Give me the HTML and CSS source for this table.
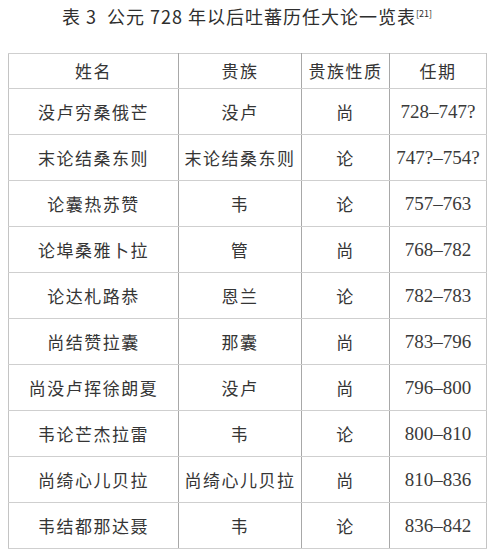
FILE: index.html
```html
<!DOCTYPE html>
<html lang="zh">
<head>
<meta charset="utf-8">
<link rel="stylesheet" href="styles.css">
</head>
<body>
<div class="page">
  <h1 class="title">表 3&nbsp; 公元 728 年以后吐蕃历任大论一览表<sup class="ref">[21]</sup></h1>
  <table class="list">
    <colgroup>
      <col class="c-name">
      <col class="c-clan">
      <col class="c-kind">
      <col class="c-term">
    </colgroup>
    <thead>
      <tr><th>姓名</th><th>贵族</th><th>贵族性质</th><th>任期</th></tr>
    </thead>
    <tbody>
      <tr><td>没卢穷桑俄芒</td><td>没卢</td><td>尚</td><td class="num">728–747?</td></tr>
      <tr><td>末论结桑东则</td><td>末论结桑东则</td><td>论</td><td class="num">747?–754?</td></tr>
      <tr><td>论囊热苏赞</td><td>韦</td><td>论</td><td class="num">757–763</td></tr>
      <tr><td>论埠桑雅卜拉</td><td>管</td><td>尚</td><td class="num">768–782</td></tr>
      <tr><td>论达札路恭</td><td>恩兰</td><td>论</td><td class="num">782–783</td></tr>
      <tr><td>尚结赞拉囊</td><td>那囊</td><td>尚</td><td class="num">783–796</td></tr>
      <tr><td>尚没卢挥徐朗夏</td><td>没卢</td><td>尚</td><td class="num">796–800</td></tr>
      <tr><td>韦论芒杰拉雷</td><td>韦</td><td>论</td><td class="num">800–810</td></tr>
      <tr><td>尚绮心儿贝拉</td><td>尚绮心儿贝拉</td><td>尚</td><td class="num">810–836</td></tr>
      <tr><td>韦结都那达聂</td><td>韦</td><td>论</td><td class="num">836–842</td></tr>
    </tbody>
  </table>
</div>
</body>
</html>
```
FILE: styles.css
```css
html, body {
  margin: 0;
  padding: 0;
  background: #ffffff;
}
.page {
  width: 494px;
  height: 557px;
  padding: 0 8px;
  box-sizing: border-box;
  font-family: "Noto Sans CJK SC", "Noto Sans", sans-serif;
  color: #333333;
}
.title {
  margin: 0;
  height: 53px;
  padding-top: 3px;
  box-sizing: border-box;
  text-align: center;
  font-size: 18px;
  font-weight: normal;
  letter-spacing: 1px;
  line-height: 26px;
  color: #2e2e2e;
}
.ref {
  font-size: 9px;
  letter-spacing: 0;
  vertical-align: 7px;
  line-height: 0;
}
.list {
  width: 478px;
  border-collapse: collapse;
  table-layout: fixed;
  font-size: 17px;
  letter-spacing: 1.5px;
  color: #353535;
}
.c-name { width: 170px; }
.c-clan { width: 123px; }
.c-kind { width: 88px; }
.c-term { width: 97px; }
.list th,
.list td {
  padding: 0;
  text-align: center;
  font-weight: normal;
  border-top: 1px solid #cfcfcf;
  border-bottom: 1px solid #cfcfcf;
  border-left: 1px solid #a8a8a8;
  border-right: 1px solid #a8a8a8;
}
.list th:first-child,
.list td:first-child { border-left-color: #c4c4c4; }
.list th:last-child,
.list td:last-child { border-right-color: #c4c4c4; }
.list th {
  height: 34px;
  line-height: 34px;
}
.list td {
  height: 45px;
  line-height: 45px;
}
.list td.num {
  font-family: "Liberation Serif", "Times New Roman", serif;
  font-size: 19px;
  letter-spacing: 0;
  color: #3a3a3a;
}
```
